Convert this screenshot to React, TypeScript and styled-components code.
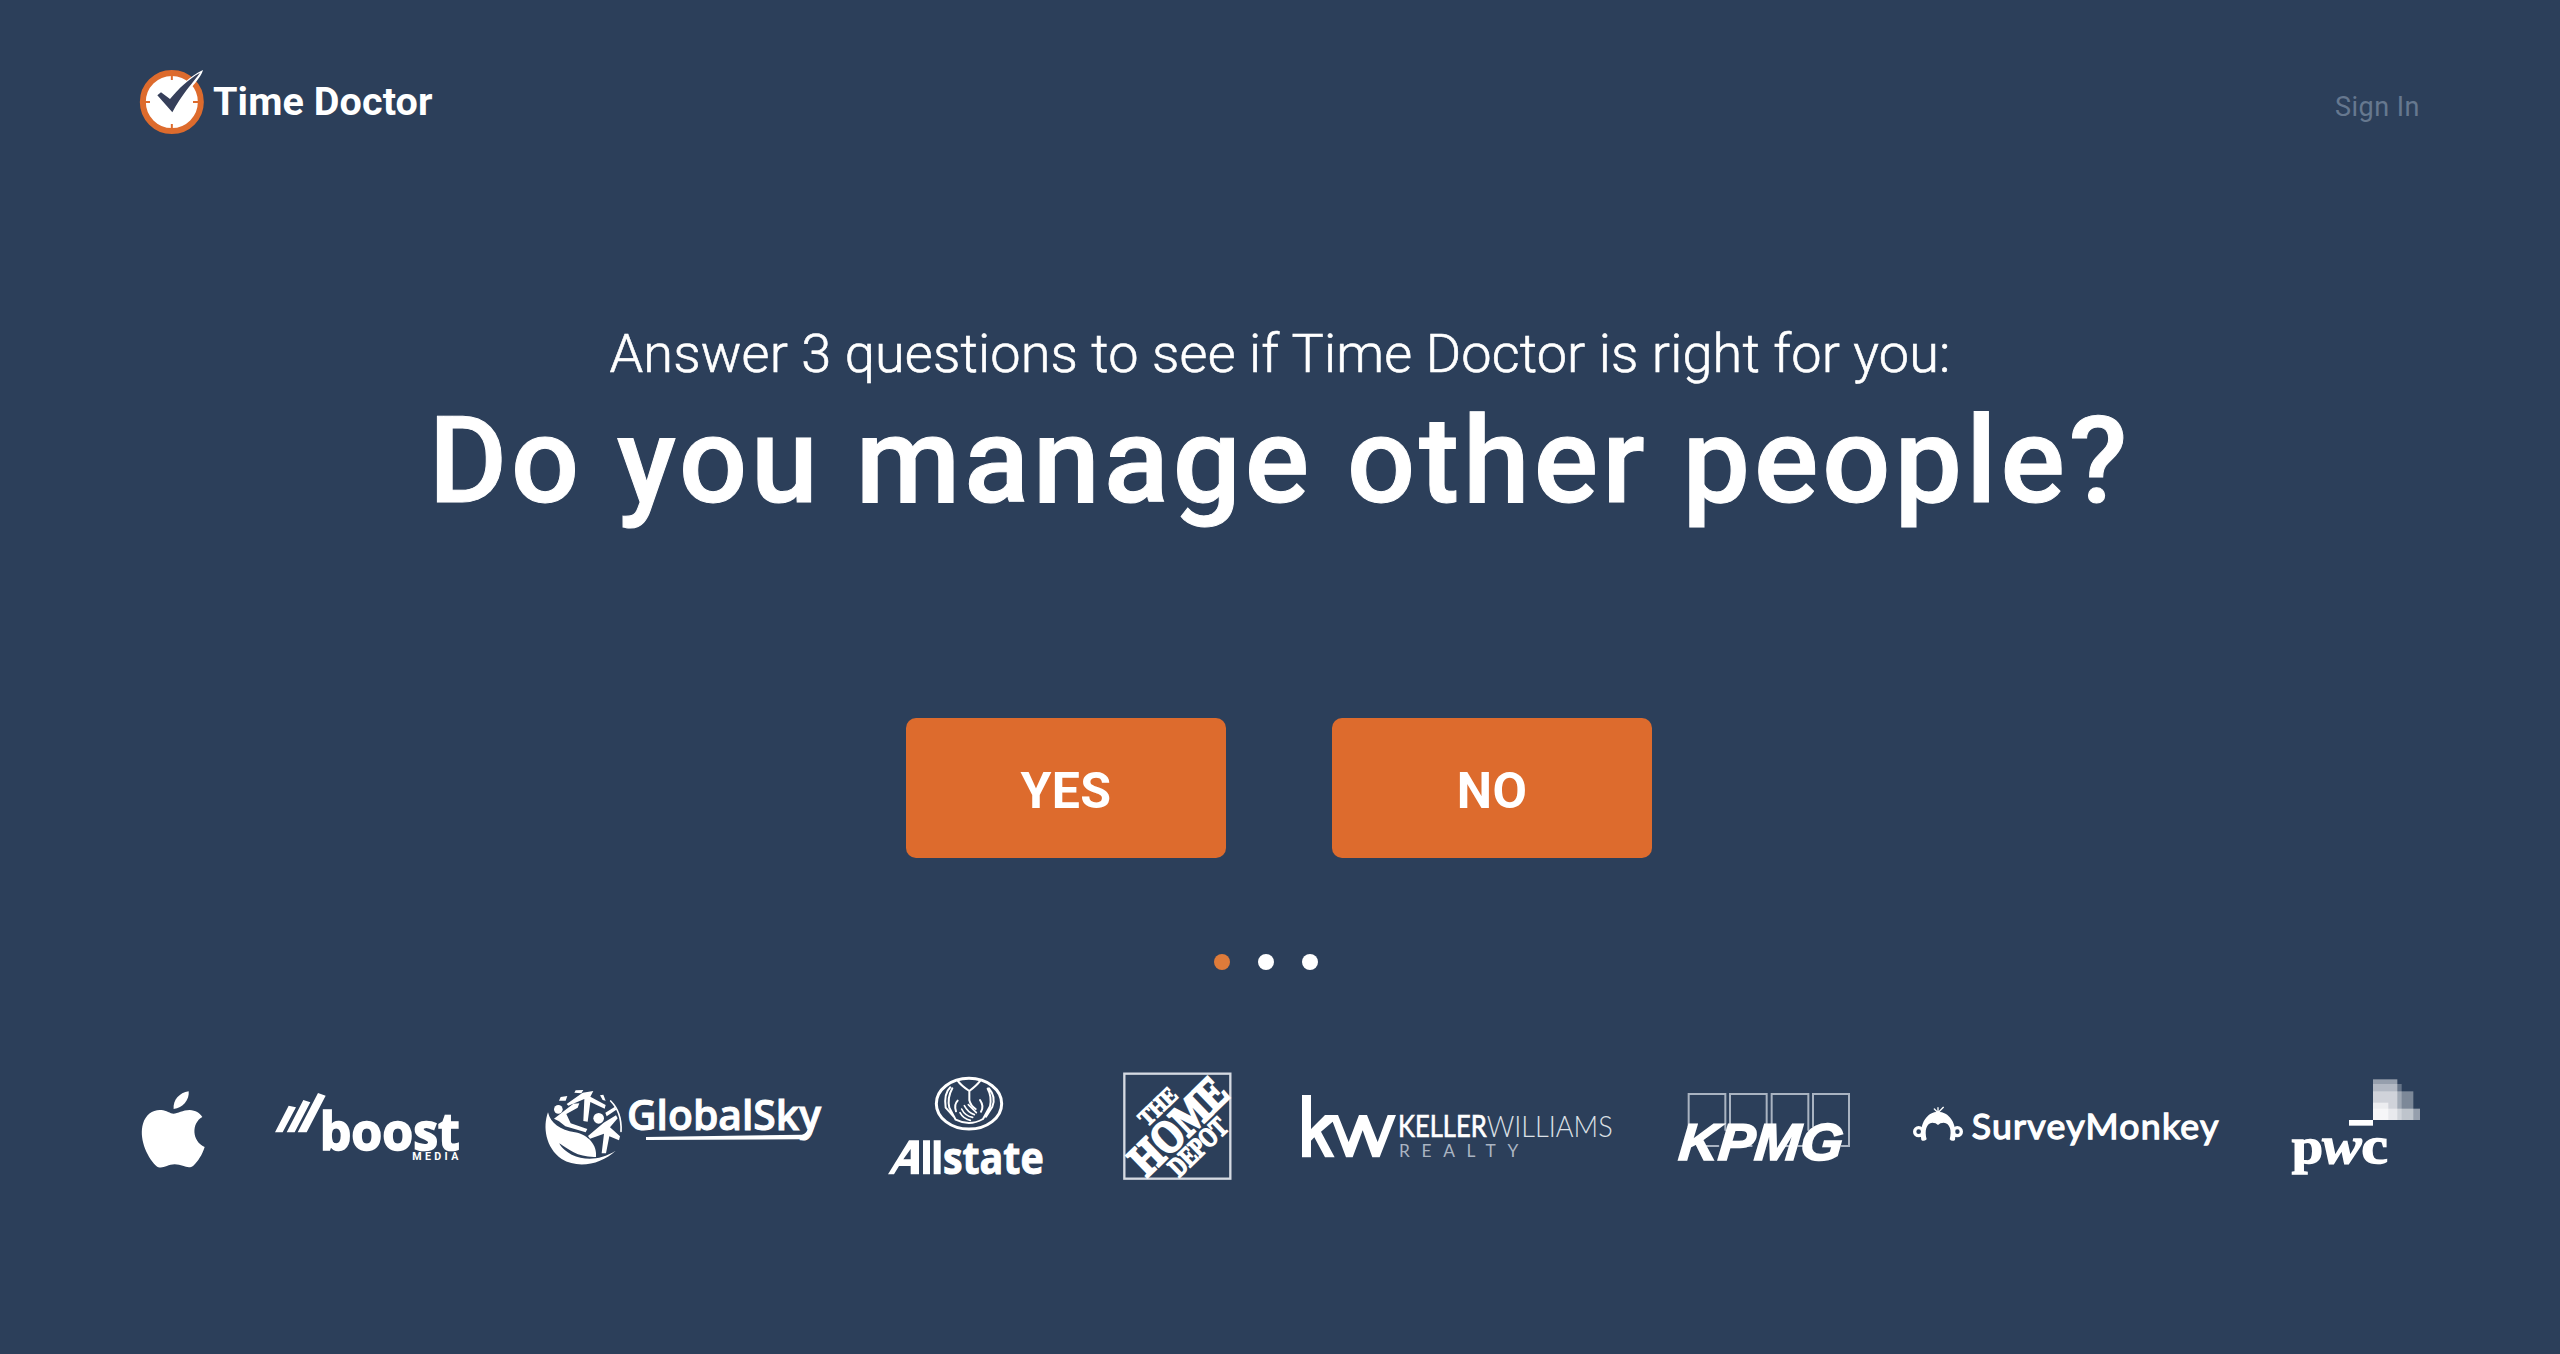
import React from "react";
import styled, { createGlobalStyle } from "styled-components";

const Global = createGlobalStyle`
  html, body { margin: 0; background: #2c3f5a; }
  *, *::before, *::after { box-sizing: border-box; }
`;

const Page = styled.div`
  width: 2560px;
  height: 1354px;
  overflow: hidden;
  display: flex;
  flex-direction: column;
  align-items: center;
  background: #2c3f5a;
  color: #fff;
  font-family: Roboto, "Liberation Sans", sans-serif;
`;

const Header = styled.header`
  width: 100%;
  height: 310px;
  padding: 68px 140px 0 139px;
  display: flex;
  justify-content: space-between;
  align-items: flex-start;
`;

const Brand = styled.div`
  display: flex;
  align-items: center;
  gap: 9px;
  height: 68px;
`;

const BrandName = styled.span`
  font-size: 39.5px;
  font-weight: 700;
  line-height: 68px;
  letter-spacing: 0.1px;
`;

const SignIn = styled.a`
  margin-top: 22px;
  font-size: 27px;
  line-height: 34px;
  letter-spacing: 0.5px;
  color: #66788f;
`;

const Intro = styled.p`
  margin: 12px 0 0;
  font-size: 54px;
  font-weight: 300;
  line-height: 64px;
  letter-spacing: 0.15px;
  -webkit-text-stroke: 0.6px #fff;
  white-space: nowrap;
`;

const Question = styled.h1`
  margin: 5px 0 0;
  font-size: 120px;
  font-weight: 500;
  line-height: 140px;
  letter-spacing: 4.05px;
  -webkit-text-stroke: 1px #fff;
  white-space: nowrap;
`;

const Answers = styled.div`
  margin-top: 187px;
  margin-right: 2px;
  display: flex;
  gap: 106px;
`;

const Answer = styled.button`
  width: 320px;
  height: 140px;
  padding: 5px 0 0;
  border: 0;
  border-radius: 10px;
  background: #dd6b2d;
  color: #fff;
  font-family: inherit;
  font-size: 50px;
  font-weight: 700;
  letter-spacing: 0.4px;
`;

const Dots = styled.div`
  width: 132px;
  margin-top: 96px;
  display: flex;
  gap: 28px;
`;

const Dot = styled.span<{ $active?: boolean }>`
  width: 16px;
  height: 16px;
  border-radius: 50%;
  background: ${(p) => (p.$active ? "#de7b3a" : "#fff")};
`;

const Clients = styled.div`
  width: 100%;
  margin-top: 90px;
  padding-left: 141px;
  display: flex;
`;

const Mark = styled.svg<{ $w: number; $before?: number }>`
  flex: none;
  width: ${(p) => p.$w}px;
  height: 130px;
  margin-left: ${(p) => p.$before ?? 0}px;
  overflow: visible;
  fill: #fff;
  stroke-linecap: round;
`;

const BrandMark = () => (
  <svg width="65" height="68" viewBox="57 54 195 204">
    <circle cx="155.500" cy="156" r="87" fill="#fff" stroke="#dd6b2d" strokeWidth="18" />
    <path d="M155.500 72V90M155.500 222V240M72 156H90M219 156H237" stroke="#dd6b2d" strokeWidth="6" />
    <path d="M112 135L123 127L150 147C176 112 209 78 249 60C242 88 196 129 157 187Z" fill="#fff" />
    <path d="M112 136L123 127L150 147C176 115 205 88 240 68C225 91 182 136 157 187Z" fill="#363f5a" />
  </svg>
);

const Apple = () => (
  <Mark $w={64} viewBox="63 0 192 390" aria-label="Apple">
    <path d="M161 147C158 121 178 98 206 94C209 119 188 145 161 147Z" />
    <path d="M160 161C174 161 188 150 209 150C227 151 239 159 247 171C213 190 216 244 254 261C247 284 234 304 220 317C204 330 190 313 164 313C139 313 125 332 108 317C77 286 57 231 69 191C77 163 99 148 124 150C139 151 151 161 160 161Z" />
  </Mark>
);

const Boost = () => (
  <Mark $w={185} $before={69} viewBox="462 0 555 390">
    <path d="M465 217L506 137L528 142L488 217ZM500 217L550 120L571 127L524 217ZM533 217L594 99L617 107L560 217Z" />
    <text x="599" y="270" fontFamily="Open Sans" fontWeight="700" fontSize="154" stroke="#fff" strokeWidth="5" textLength="420" lengthAdjust="spacingAndGlyphs">boost</text>
    <text x="877" y="301" fontFamily="Roboto" fontWeight="700" fontSize="32" textLength="138">MEDIA</text>
  </Mark>
);

const GlobalSky = () => (
  <Mark $w={279} $before={84} viewBox="69 0 837 390">
    <path d="M84 157C68 200 76 263 125 297C175 328 245 312 287 272C240 301 195 302 155 284C135 274 121 259 118 250C145 268 174 293 228 291C232 256 206 225 165 217C120 210 92 190 84 157Z" />
    <circle cx="115" cy="148" r="13" />
    <circle cx="236" cy="175" r="16" />
    <path d="M122 111L142 108L137 122L117 122ZM167 91L190 90L184 100L163 98ZM240 106L250 104L257 122L248 120Z" />
    <path d="M140 132L188 98L220 93L211 110L257 135L254 146L211 126L203 185L190 183L193 117L145 137ZM102 176L160 131L178 130L173 143L139 162L152 190L202 207L197 217L136 199L117 184ZM204 228L251 188L288 166L293 175L270 202L300 229L297 241L268 229L258 280L245 280L252 221L210 236ZM256 158L285 140L289 149L260 169Z" />
    <path d="M272 123Q306 157 303 214" fill="none" stroke="#fff" strokeWidth="5" />
    <text x="321" y="211" fontFamily="Open Sans" fontWeight="600" fontSize="126" stroke="#fff" strokeWidth="3" textLength="582" lengthAdjust="spacingAndGlyphs">GlobalSky</text>
    <path d="M378 231L846 224Q861 220 870 197L884 195Q872 239 847 238L378 240Z" />
  </Mark>
);

const Allstate = () => (
  <Mark $w={156} $before={65} viewBox="50 30 468 390">
    <ellipse cx="296" cy="161" rx="98" ry="76" fill="none" stroke="#fff" strokeWidth="9" />
    <g fill="none" stroke="#fff" strokeWidth="6">
      <path d="M262 92Q272 107 297 123Q320 106 330 92M297 123V151Q301 168 316 177" />
      <path d="M240 112Q220 130 226 173L250 200M246 115Q230 144 237 173L256 209Q298 230 338 207L359 169Q365 139 352 116M356 115Q378 141 366 170L347 200" />
      <path d="M262 152Q250 164 257 184M329 150Q342 169 332 185" />
      <path d="M294 164L318 188M282 167Q293 188 312 194M274 177Q284 198 307 202M269 188Q279 207 300 211" strokeWidth="5" />
    </g>
    <path d="M53 373L116 271H146V373H121V348H86L71 373ZM121 328V297L99 328ZM158 271H179V373H158ZM190 271H211V373H190Z" />
    <text x="218" y="371" fontFamily="Open Sans" fontWeight="700" fontSize="132" stroke="#fff" strokeWidth="3" textLength="302" lengthAdjust="spacingAndGlyphs">state</text>
  </Mark>
);

const HomeDepot = () => (
  <Mark $w={109} $before={80} viewBox="760 30 327 390">
    <rect x="764" y="71" width="318" height="315" fill="none" stroke="#d5dae2" strokeWidth="7" />
    <g fontFamily="Liberation Serif" fontWeight="700" stroke="#fff">
      <text transform="translate(833 232) rotate(-44)" fontSize="70" strokeWidth="4" textLength="132" lengthAdjust="spacingAndGlyphs">THE</text>
      <text transform="translate(831 383) rotate(-44)" fontSize="138" strokeWidth="8" textLength="352" lengthAdjust="spacingAndGlyphs">HOME</text>
      <text transform="translate(928 384) rotate(-44)" fontSize="83" strokeWidth="5" textLength="212" lengthAdjust="spacingAndGlyphs">DEPOT</text>
    </g>
  </Mark>
);

const KellerWilliams = () => (
  <Mark $w={311} $before={69} viewBox="63 -30 933 390">
    <path d="M66 75H93V177L135 135H174L206 216L237 135H261L293 216L323 135H348L299 262H277L248 181L218 262H198L158 155L123 185L164 262H135L103 202L93 212V262H66Z" />
    <text x="354" y="201" fontFamily="Lato" fontWeight="400" fontSize="91" stroke="#fff" strokeWidth="2" textLength="266" lengthAdjust="spacingAndGlyphs">KELLER</text>
    <text x="620" y="201" fontFamily="Lato" fontWeight="300" fontSize="91" fill="#dde1e7" textLength="378" lengthAdjust="spacingAndGlyphs">WILLIAMS</text>
    <text x="357" y="260" fontFamily="Lato" fontWeight="400" fontSize="52" fill="#aab4c2" letterSpacing="35">REALTY</text>
  </Mark>
);

const Kpmg = () => (
  <Mark $w={172} $before={66} viewBox="54 -30 516 390">
    <g fill="none" stroke="#a9b3c1" strokeWidth="6">
      <path d="M86 170V72H196V180M210 170V72H320V170M335 170V72H445V180M459 170V72H567V228H545M125 228H175M248 228H275M365 228H385M415 228H430" />
    </g>
    <text transform="translate(53 270) skewX(-5)" fontFamily="Liberation Sans" fontStyle="italic" fontWeight="700" fontSize="156" stroke="#fff" strokeWidth="5" textLength="492" lengthAdjust="spacingAndGlyphs">KPMG</text>
  </Mark>
);

const SurveyMonkey = () => (
  <Mark $w={307} $before={62} viewBox="36 0 921 390">
    <circle cx="56" cy="215" r="12" fill="none" stroke="#fff" strokeWidth="10" />
    <circle cx="172" cy="215" r="12" fill="none" stroke="#fff" strokeWidth="10" />
    <path d="M64 240C57 188 83 155 114 155C146 155 173 188 165 240Q156 246 149 238C156 211 150 190 131 188Q120 188 114 195Q108 188 97 188C79 190 73 211 80 238Q71 246 64 240Z" />
    <path d="M114 158L103 147M114 158V143M114 158L130 142" fill="none" stroke="#fff" strokeWidth="4" />
    <text x="215" y="237" fontFamily="Lato" fontWeight="400" fontSize="107" stroke="#fff" strokeWidth="4" textLength="740">SurveyMonkey</text>
  </Mark>
);

const Pwc = () => (
  <Mark $w={128} $before={73} viewBox="0 0 384 390">
    <g>
      <rect x="243" y="58" width="73" height="122" opacity=".5" />
      <rect x="243" y="72" width="86" height="108" opacity=".28" />
      <rect x="243" y="94" width="121" height="86" opacity=".38" />
      <rect x="243" y="128" width="46" height="52" opacity=".6" />
      <rect x="243" y="146" width="141" height="34" opacity=".5" />
      <rect x="171" y="180" width="72" height="17" />
    </g>
    <g fontFamily="Liberation Serif" fontWeight="700" stroke="#fff" strokeWidth="4">
      <text x="-1" y="310" fontSize="154" textLength="94" lengthAdjust="spacingAndGlyphs">p</text>
      <text x="91" y="310" fontStyle="italic" fontSize="160" textLength="118" lengthAdjust="spacingAndGlyphs">w</text>
      <text x="208" y="310" fontSize="156" textLength="80" lengthAdjust="spacingAndGlyphs">c</text>
    </g>
  </Mark>
);

export default function App() {
  return (
    <>
      <Global />
      <Page>
        <Header>
          <Brand>
            <BrandMark />
            <BrandName>Time Doctor</BrandName>
          </Brand>
          <SignIn>Sign In</SignIn>
        </Header>
        <Intro>Answer 3 questions to see if Time Doctor is right for you:</Intro>
        <Question>Do you manage other people?</Question>
        <Answers>
          <Answer>YES</Answer>
          <Answer>NO</Answer>
        </Answers>
        <Dots>
          <Dot $active />
          <Dot />
          <Dot />
        </Dots>
        <Clients>
          <Apple />
          <Boost />
          <GlobalSky />
          <Allstate />
          <HomeDepot />
          <KellerWilliams />
          <Kpmg />
          <SurveyMonkey />
          <Pwc />
        </Clients>
      </Page>
    </>
  );
}
